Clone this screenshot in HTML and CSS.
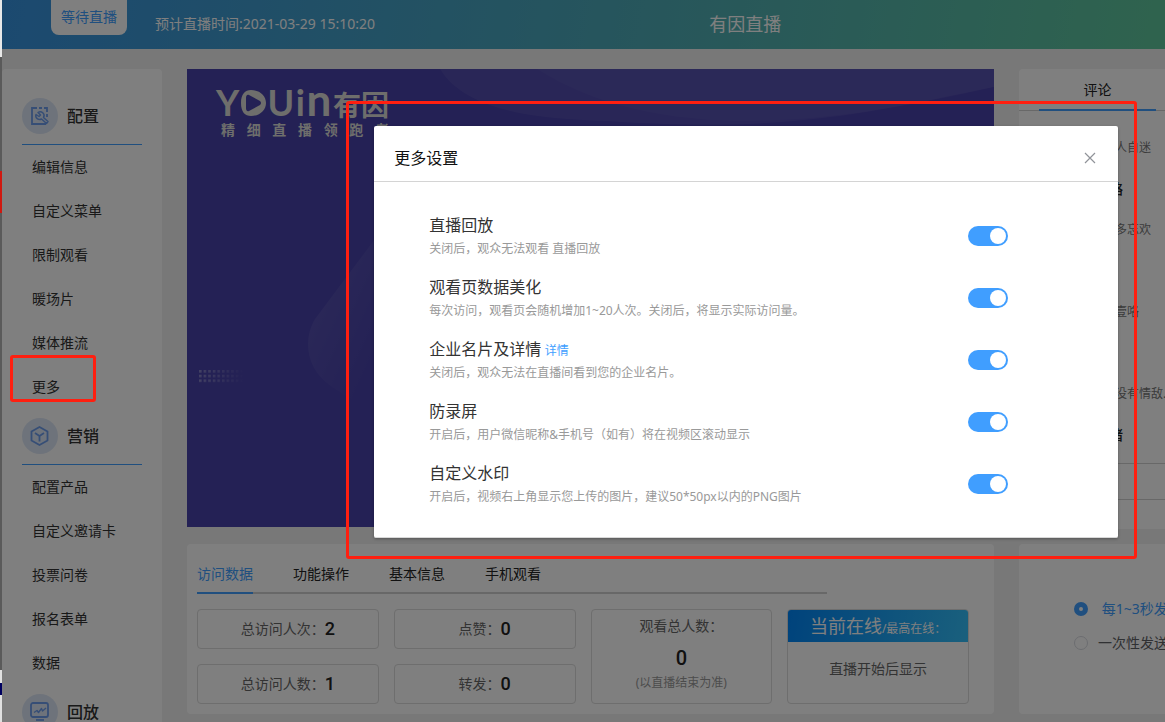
FILE: index.html
```html
<!DOCTYPE html>
<html lang="zh-CN">
<head>
<meta charset="utf-8">
<title>有因直播</title>
<link rel="stylesheet" href="styles.css">
</head>
<body>
<div class="edge"></div>
<div class="app">
  <header class="topbar">
    <span class="status">等待直播</span>
    <span class="schedule">预计直播时间:2021-03-29 15:10:20</span>
    <h1 class="room-title">有因直播</h1>
  </header>

  <div class="layout">
    <nav class="sidebar">
      <h2 class="group-title">
        <span class="group-icon">
          <svg width="20" height="20" viewBox="0 0 20 20" fill="none" stroke="currentColor" stroke-width="1.800">
            <path d="M7 2H2v16h14M9 2h3M14 2h3v4M17 8v3"/>
            <path d="M8 6.500a3.800 3.800 0 0 1 5.500 5l4.500 4-1.500 2-5-4.500a3.800 3.800 0 0 1-5.500-4.500l3 2 1.500-1.500z" stroke-width="1.500" stroke-linejoin="round"/>
          </svg>
        </span>配置
      </h2>
      <ul class="menu">
        <li><a href="#">编辑信息</a></li>
        <li><a href="#">自定义菜单</a></li>
        <li><a href="#">限制观看</a></li>
        <li><a href="#">暖场片</a></li>
        <li><a href="#">媒体推流</a></li>
        <li class="marked"><a href="#">更多</a></li>
      </ul>
      <h2 class="group-title">
        <span class="group-icon">
          <svg width="20" height="20" viewBox="0 0 20 20" fill="none" stroke="currentColor" stroke-width="1.800" stroke-linejoin="round">
            <path d="M9.500 1l8 4.500v9l-8 4.500-8-4.500v-9z"/>
            <path d="M5 7l4.500 3 4.500-3M9.500 10v5.500"/>
          </svg>
        </span>营销
      </h2>
      <ul class="menu">
        <li><a href="#">配置产品</a></li>
        <li><a href="#">自定义邀请卡</a></li>
        <li><a href="#">投票问卷</a></li>
        <li><a href="#">报名表单</a></li>
        <li><a href="#">数据</a></li>
      </ul>
      <h2 class="group-title">
        <span class="group-icon">
          <svg width="20" height="20" viewBox="0 0 20 20" fill="none" stroke="currentColor" stroke-width="1.800" stroke-linejoin="round">
            <rect x="1" y="1" width="17" height="14" rx="2"/>
            <path d="M4 10.500l3-2 1.500 2 3-4 1 2.500 3.500-3" stroke-width="1.400"/>
            <path d="M6 18h8"/>
          </svg>
        </span>回放
      </h2>
    </nav>

    <main class="content">
      <section class="banner">
        <svg class="banner-art" viewBox="0 0 807 458" preserveAspectRatio="none">
          <defs>
            <linearGradient id="play" x1="0" y1="0" x2="1" y2="1">
              <stop offset="0" stop-color="#fff" stop-opacity=".14"/>
              <stop offset=".6" stop-color="#fff" stop-opacity="0"/>
            </linearGradient>
            <linearGradient id="fade" x1="0" x2="1" y1="0" y2="0">
              <stop offset="0" stop-color="#fff" stop-opacity=".35"/>
              <stop offset="1" stop-color="#fff" stop-opacity="0"/>
            </linearGradient>
            <pattern id="dots" x="12" y="301" width="4.600" height="4.700" patternUnits="userSpaceOnUse">
              <rect width="2.600" height="2.600" fill="#fff"/>
            </pattern>
            <mask id="dotmask"><rect x="12" y="301" width="46" height="13" fill="url(#dots)"/></mask>
          </defs>
          <path d="M253 0C280 45 360 50 420 52 600 65 690 42 807 18V0z" fill="#fff" opacity=".06"/>
          <path d="M350 0C460 70 620 62 807 18V0z" fill="#fff" opacity=".03"/>
          <path d="M220 127L128 250C116 270 118 300 145 318L187 346 260 385V80z" fill="url(#play)"/>
          <rect x="12" y="301" width="46" height="13" fill="url(#fade)" mask="url(#dotmask)"/>
        </svg>
        <div class="brand">
          <div class="brand-name">
            <span>Y</span>
            <svg width="25" height="26" viewBox="0 0 25 26" fill="currentColor" fill-rule="evenodd">
              <path d="M10 0C19 0 25 6 25 13S19 26 10 26C4 26 0 22 0 13S4 0 10 0zM8 5C6 4 5 6 5 8v10c0 2 1 4 3 3l11-6q2-2 0-4z"/>
            </svg>
            <span>U</span><span>i</span><span class="brand-n">n</span><span class="brand-cn">有因</span>
          </div>
          <div class="brand-line"><span>精</span><span>细</span><span>直</span><span>播</span><span>领</span><span>跑</span><span>者</span></div>
        </div>
      </section>

      <section class="panel stats-panel">
        <div class="tabs">
          <button class="tab active" type="button">访问数据</button>
          <button class="tab" type="button">功能操作</button>
          <button class="tab" type="button">基本信息</button>
          <button class="tab" type="button">手机观看</button>
        </div>
        <div class="stats">
          <div class="stat">总访问人次：<b>2</b></div>
          <div class="stat">点赞：<b>0</b></div>
          <div class="stat tall total">
            <span>观看总人数：</span>
            <b>0</b>
            <small>(以直播结束为准)</small>
          </div>
          <div class="stat tall online">
            <div class="online-head">当前在线<small>/最高在线：</small></div>
            <div class="online-body">直播开始后显示</div>
          </div>
          <div class="stat">总访问人数：<b>1</b></div>
          <div class="stat">转发：<b>0</b></div>
        </div>
      </section>
    </main>

    <aside class="side">
      <section class="panel chat">
        <div class="chat-tabs"><button class="chat-tab" type="button">评论</button></div>
        <ul class="comments">
          <li><p>人自迷</p></li>
          <li><strong>略</strong><p>多忘欢</p></li>
          <li><p>壹咯</p></li>
          <li><p>没有情敌...</p></li>
          <li><strong>睹</strong></li>
        </ul>
        <div class="chat-tools"></div>
      </section>
      <section class="panel send">
        <label class="choice on"><input type="radio" name="pace" checked>&nbsp;每1~3秒发送</label>
        <label class="choice"><input type="radio" name="pace">一次性发送</label>
      </section>
    </aside>
  </div>

  <div class="overlay">
    <div class="dialog" role="dialog" aria-labelledby="dialog-title">
      <div class="dialog-head">
        <h2 id="dialog-title">更多设置</h2>
        <button class="close" type="button" aria-label="关闭">
          <svg width="12" height="12" viewBox="0 0 12 12" stroke="currentColor" stroke-width="1.200"><path d="M1 1l10 10M11 1L1 11"/></svg>
        </button>
      </div>
      <div class="dialog-body">
        <div class="setting">
          <div><label for="s1">直播回放</label><p>关闭后，观众无法观看 直播回放</p></div>
          <input class="switch" id="s1" type="checkbox" checked>
        </div>
        <div class="setting">
          <div><label for="s2">观看页数据美化</label><p>每次访问，观看页会随机增加1~20人次。关闭后，将显示实际访问量。</p></div>
          <input class="switch" id="s2" type="checkbox" checked>
        </div>
        <div class="setting">
          <div><label for="s3">企业名片及详情</label> <a href="#">详情</a><p>关闭后，观众无法在直播间看到您的企业名片。</p></div>
          <input class="switch" id="s3" type="checkbox" checked>
        </div>
        <div class="setting">
          <div><label for="s4">防录屏</label><p>开启后，用户微信昵称&amp;手机号（如有）将在视频区滚动显示</p></div>
          <input class="switch" id="s4" type="checkbox" checked>
        </div>
        <div class="setting">
          <div><label for="s5">自定义水印</label><p>开启后，视频右上角显示您上传的图片，建议50*50px以内的PNG图片</p></div>
          <input class="switch" id="s5" type="checkbox" checked>
        </div>
      </div>
    </div>
  </div>
</div>
</body>
</html>
```

FILE: styles.css
```css
*, *::before, *::after { box-sizing: border-box; }

body {
  margin: 0;
  display: flex;
  height: 100vh;
  overflow: hidden;
  font: 14px/20px "Noto Sans", "Noto Sans CJK SC", sans-serif;
  color: #333;
}

h1, h2, p, ul { margin: 0; padding: 0; font-weight: 400; }
ul { list-style: none; }
a { color: inherit; text-decoration: none; }
button { padding: 0; border: 0; background: none; font: inherit; color: inherit; }

.edge {
  flex: none;
  width: 2px;
  background: linear-gradient(#e8e8e8 57px, #5a5a5a 57px 171px, #d01810 171px 213px, #5a5a5a 213px 670px, #e0e0e0 670px 683px, #000060 683px 695px, #e0e0e0 695px);
}

.app {
  position: relative;
  flex: 1;
  min-width: 0;
  background: #f0f0f0;
}

/* top bar */
.topbar {
  display: flex;
  height: 49px;
  background: linear-gradient(100deg, #3793e0, #4eacb8 55%, #5fc79c);
  color: #fff;
}
.status {
  width: 76px;
  height: 35px;
  margin-left: 49px;
  border-radius: 0 0 8px 8px;
  background: #fff;
  color: #409eff;
  line-height: 34px;
  text-align: center;
}
.schedule { margin-left: 28px; line-height: 48px; }
.room-title { margin: 0 33% 0 auto; font-size: 18px; line-height: 49px; }

/* columns */
.layout {
  display: flex;
  gap: 25px;
  height: calc(100vh - 49px);
  padding-top: 20px;
}
.panel { background: #fff; border-radius: 4px; }

.sidebar {
  flex: none;
  width: 160px;
  padding: 20px 20px 0;
  background: #fff;
  border-radius: 4px 4px 0 0;
}
.group-title {
  display: flex;
  align-items: center;
  gap: 9px;
  margin-top: 9px;
  padding-bottom: 10px;
  border-bottom: 1px solid #409eff;
  font-size: 16px;
  font-weight: 500;
}
.group-icon {
  display: grid;
  place-items: center;
  width: 36px;
  height: 36px;
  border-radius: 50%;
  background: #dde7f6;
  color: #6c9cec;
}
.menu li { line-height: 44px; padding-left: 10px; }
.marked { position: relative; }
.marked::after {
  content: "";
  position: absolute;
  z-index: 20;
  left: -12px;
  top: -10px;
  width: 86px;
  height: 47px;
  border: 3px solid #ff1f10;
  border-radius: 3px;
}

.content { flex: 1; min-width: 0; }

/* banner */
.banner {
  position: relative;
  height: 458px;
  padding: 12px 0 0 29px;
  background: #4842aa;
  overflow: hidden;
}
.banner-art { position: absolute; inset: 0; width: 100%; height: 100%; }
.brand { position: relative; width: 173px; color: #dcdcd8; }
.brand-name {
  display: flex;
  align-items: baseline;
  justify-content: space-between;
  height: 40px;
  font: 700 36px/36px Lato, sans-serif;
}
.brand-n { font-size: 44px; }
.brand-cn { font: 700 28px/28px "Noto Sans CJK SC", sans-serif; }
.brand-line {
  display: flex;
  justify-content: space-between;
  padding-left: 5px;
  font-size: 14px;
  line-height: 18px;
  font-weight: 700;
}

/* statistics */
.stats-panel { margin-top: 17px; padding: 0 25px 10px 10px; }
.tabs {
  display: flex;
  gap: 40px;
  height: 50px;
  margin-right: 142px;
  border-bottom: 2px solid #d0d0d0;
}
.tab { height: 50px; padding-top: 12px; border-bottom: 2px solid transparent; color: #222; }
.tab.active { border-color: #409eff; color: #409eff; }
.stats {
  display: grid;
  grid-template-columns: repeat(4, 1fr);
  grid-template-rows: 40px 40px;
  gap: 15px;
  margin-top: 15px;
}
.stat {
  display: flex;
  align-items: center;
  justify-content: center;
  border: 1px solid #dcdcdc;
  border-radius: 4px;
  color: #666;
}
.stat b { font: 500 18px/20px Roboto, sans-serif; color: #222; }
.stat.tall { grid-row: span 2; flex-direction: column; }
.total span { line-height: 30px; }
.stat.total b { font-size: 20px; line-height: 34px; }
.total small { font-size: 12px; line-height: 16px; padding-bottom: 12px; color: #999; }
.stat.online { justify-content: flex-start; overflow: hidden; }
.online-head {
  align-self: stretch;
  height: 32px;
  background: linear-gradient(100deg, #0086f8, #34c0fa);
  color: #fff;
  font-size: 18px;
  line-height: 32px;
  text-align: center;
}
.online-head small { font-size: 12px; }
.online-body { line-height: 54px; }

/* right column */
.side { flex: none; width: 146px; overflow: hidden; white-space: nowrap; }
.side .panel { border-radius: 4px 0 0 4px; }
.chat { height: 460px; }
.chat-tabs { height: 42px; padding-left: 20px; border-bottom: 1px solid #d0d0d0; }
.chat-tab { width: 117px; height: 42px; padding-top: 2px; border-bottom: 2px solid #409eff; color: #222; }
.comments { padding: 16px 0 0 90px; font-size: 12px; line-height: 41px; color: #777; }
.comments li { display: flex; flex-direction: column; justify-content: flex-end; height: 82px; }
.comments li:first-child, .comments li:last-child { height: 41px; }
.comments p { padding-left: 6px; }
.comments strong { font-size: 14px; font-weight: 500; color: #222; }
.chat-tools { height: 37px; margin-top: 8px; border: solid #d0d0d0; border-width: 1px 0; }
.send { height: 170px; margin-top: 15px; padding: 48px 0 0 55px; }
.choice { display: flex; align-items: center; height: 34px; color: #606266; }
.choice.on { color: #409eff; }
.choice input {
  appearance: none;
  flex: none;
  width: 14px;
  height: 14px;
  margin: 0 10px 0 0;
  border: 1px solid #d8dae0;
  border-radius: 50%;
  background: #fff;
}
.choice input:checked { border: 5px solid #409eff; }

/* dialog */
.overlay {
  position: absolute;
  inset: 0;
  z-index: 10;
  padding-top: 126px;
  background: rgba(0, 0, 0, .5);
}
.dialog {
  position: relative;
  width: 64%;
  margin-left: 32%;
  border-bottom: 1px solid #d8d8d8;
  border-radius: 2px;
  background: #fff;
  box-shadow: 0 1px 3px rgba(0, 0, 0, .3);
}
.dialog::after {
  content: "";
  position: absolute;
  inset: -25px -19px -22px -28px;
  border: 3px solid #ff1f10;
  border-radius: 3px;
  pointer-events: none;
}
.dialog-head {
  display: flex;
  align-items: center;
  justify-content: space-between;
  height: 56px;
  padding: 8px 22px 0 20px;
  border-bottom: 1px solid #d4d4d4;
}
.dialog-head h2 { font-size: 16px; line-height: 24px; color: #111; }
.close { display: grid; color: #909399; }
.dialog-body {
  display: grid;
  gap: 14px;
  padding: 31px 110px 28px 55px;
}
.setting { display: flex; justify-content: space-between; }
.setting label { font-size: 16px; line-height: 24px; }
.setting a { font-size: 12px; color: #409eff; }
.setting p { font-size: 12px; line-height: 24px; color: #999; }
.switch {
  appearance: none;
  display: flex;
  justify-content: flex-end;
  flex: none;
  width: 40px;
  height: 20px;
  margin: 13px 0 0;
  padding: 2px;
  border-radius: 10px;
  background: #409eff;
}
.switch::before {
  content: "";
  width: 16px;
  height: 16px;
  border-radius: 50%;
  background: #fff;
}
```
